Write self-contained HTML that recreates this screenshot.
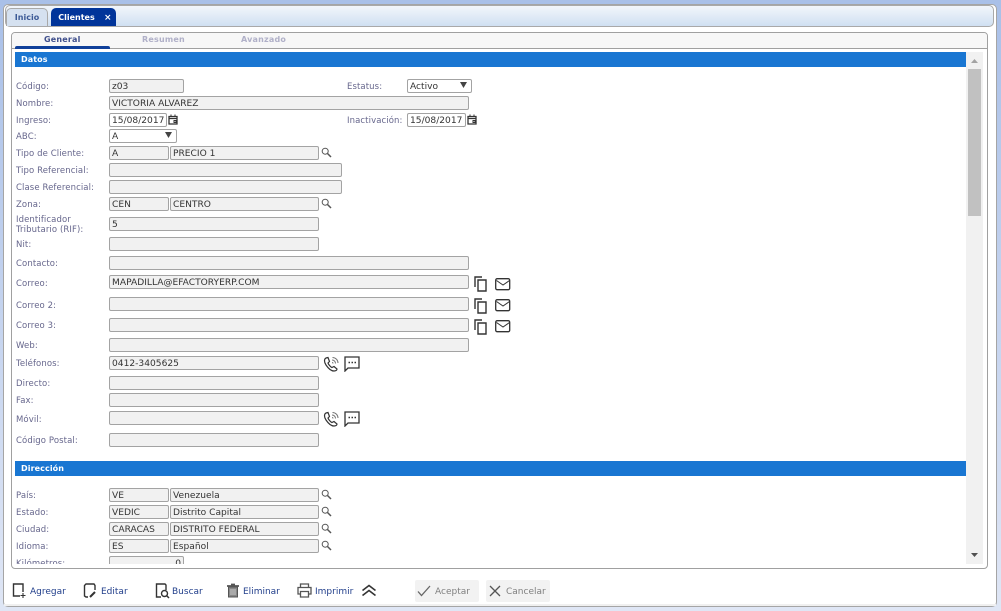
<!DOCTYPE html>
<html><head><meta charset="utf-8">
<style>
html,body{margin:0;padding:0}
body{width:1001px;height:611px;overflow:hidden;position:relative;background:linear-gradient(#a9c0e8,#dfe6f5);font-family:"DejaVu Sans","Liberation Sans",sans-serif;font-size:9px}
div,svg,span{position:absolute;box-sizing:border-box}
#outer{left:3px;top:4px;width:994px;height:603px;background:#fff;border:1px solid #a5a5a5;border-radius:5px}
#bar{left:5px;top:5px;width:989px;height:22px;background:linear-gradient(#f2f6fb,#d0e0f2);border:1px solid #a9a9a9;border-radius:5px}
.tab{top:8px;height:18px;border-radius:5px 5px 0 0;font-weight:bold;font-size:8px;line-height:20px;text-align:center}
#panel{left:11px;top:32px;width:977px;height:537px;border:1px solid #a0a0a0;border-radius:4px;background:#fff;overflow:hidden}
#strip{left:12px;top:33px;width:975px;height:16px;background:#f7f7f7;border-bottom:1px solid #a0a0a0;border-radius:3px 3px 0 0}
.st{top:35px;font-weight:bold;font-size:8px;color:#b0b0c8;letter-spacing:.2px;white-space:nowrap}
.sec{left:15px;width:951px;height:15px;background:#1976d2;color:#fff;font-weight:bold;font-size:8px;line-height:15px;padding-left:6px;letter-spacing:.1px}
.l{left:16px;font-size:8.5px;color:#66668c;white-space:nowrap;line-height:13px;letter-spacing:.1px}
.i{height:14px;background:#f1f1f1;border:1px solid #a3a3a3;border-radius:2px;color:#333;font-size:9.1px;line-height:14px;padding-left:2px;white-space:nowrap;overflow:hidden}
.w{background:#fff}
.f{top:585px;font-size:9px;color:#23408c;white-space:nowrap;line-height:14px}
.g{color:#808080}
svg{fill:none;stroke:#333}
.s{stroke:#555}
</style></head><body>
<div id="outer"></div>
<div id="bar"></div>
<div class="tab" style="left:6px;width:42px;background:#d5e1f0;border:1px solid #a9a9a9;border-bottom:0;color:#3c5a96;line-height:18px">Inicio</div>
<div class="tab" style="left:51px;width:65px;background:#00349a;color:#fff;padding-right:14px">Clientes<span style="left:53px;top:0;font-size:9px;font-weight:bold">×</span></div>

<div id="panel"></div>
<div id="strip"></div>
<div class="st" style="left:44px;color:#3f4f8c">General</div>
<div class="st" style="left:142px">Resumen</div>
<div class="st" style="left:241px">Avanzado</div>
<div style="left:15px;top:46px;width:95px;height:3px;background:#10409a;border-radius:2px 2px 0 0"></div>

<div style="left:966px;top:52px;width:17px;height:512px;background:#f1f1f1"></div>
<div style="left:968px;top:69px;width:13px;height:147px;background:#c1c1c1"></div>
<svg style="left:970px;top:58px;stroke:none" width="9" height="6"><path d="M1 5h7L4.500 1z" style="fill:#a3a3a3"/></svg>
<svg style="left:970px;top:552px;stroke:none" width="9" height="6"><path d="M1 1h7L4.500 5z" style="fill:#505050"/></svg>

<div class="sec" style="top:52px">Datos</div>
<div class="l" style="top:81px">Código:</div><div class="i" style="left:109px;top:79px;width:75px">z03</div>
<div class="l" style="left:347px;top:81px">Estatus:</div>
<div class="i w" style="left:407px;top:79px;width:65px">Activo<svg style="left:51px;top:2px;stroke:none" width="9" height="7"><path d="M1 0h7L4.500 6z" style="fill:#444"/></svg></div>
<div class="l" style="top:98px">Nombre:</div><div class="i" style="left:109px;top:96px;width:360px">VICTORIA ALVAREZ</div>
<div class="l" style="top:115px">Ingreso:</div><div class="i w" style="left:109px;top:113px;width:58px">15/08/2017</div>
<svg style="left:168px;top:114px" width="10" height="11" viewBox="0 0 10 11"><path d="M1 2.500h8V10H1zM1 4.500h8" stroke-width="1.300"/><path d="M3 .5v2M7 .5v2M6 6.500h2v2H6z"/></svg>
<div class="l" style="left:347px;top:115px">Inactivación:</div><div class="i w" style="left:407px;top:113px;width:59px">15/08/2017</div>
<svg style="left:467px;top:114px" width="10" height="11" viewBox="0 0 10 11"><path d="M1 2.500h8V10H1zM1 4.500h8" stroke-width="1.300"/><path d="M3 .5v2M7 .5v2M6 6.500h2v2H6z"/></svg>
<div class="l" style="top:131px">ABC:</div>
<div class="i w" style="left:109px;top:129px;width:68px">A<svg style="left:54px;top:2px;stroke:none" width="9" height="7"><path d="M1 0h7L4.500 6z" style="fill:#444"/></svg></div>
<div class="l" style="top:148px">Tipo de Cliente:</div><div class="i" style="left:109px;top:146px;width:60px">A</div><div class="i" style="left:170px;top:146px;width:149px">PRECIO 1</div>
<svg class="s" style="left:321px;top:147px" width="11" height="11" viewBox="0 0 11 11"><circle cx="4.200" cy="4.200" r="3"/><path d="M6.500 6.500l3.500 3.500" stroke-width="1.500"/></svg>
<div class="l" style="top:165px">Tipo Referencial:</div><div class="i" style="left:109px;top:163px;width:233px"></div>
<div class="l" style="top:182px">Clase Referencial:</div><div class="i" style="left:109px;top:180px;width:233px"></div>
<div class="l" style="top:199px">Zona:</div><div class="i" style="left:109px;top:197px;width:60px">CEN</div><div class="i" style="left:170px;top:197px;width:149px">CENTRO</div>
<svg class="s" style="left:321px;top:198px" width="11" height="11" viewBox="0 0 11 11"><circle cx="4.200" cy="4.200" r="3"/><path d="M6.500 6.500l3.500 3.500" stroke-width="1.500"/></svg>
<div class="l" style="top:214px">Identificador</div><div class="l" style="top:224px">Tributario (RIF):</div><div class="i" style="left:109px;top:217px;width:210px">5</div>
<div class="l" style="top:239px">Nit:</div><div class="i" style="left:109px;top:237px;width:210px"></div>
<div class="l" style="top:258px">Contacto:</div><div class="i" style="left:109px;top:256px;width:360px"></div>
<div class="l" style="top:278px">Correo:</div><div class="i" style="left:109px;top:275px;width:360px">MAPADILLA@EFACTORYERP.COM</div>
<svg style="left:474px;top:276px" width="14" height="16" viewBox="0 0 14 16"><path d="M1 11V1h7" stroke-width="1.400"/><path d="M4 4h8v11H4z" stroke-width="1.400"/></svg>
<svg style="left:495px;top:278px" width="16" height="13" viewBox="0 0 16 13"><rect x=".7" y=".7" width="14" height="11" rx="1.500" stroke-width="1.300"/><path d="M1.500 2.500L8 7l6.500-4.500"/></svg>
<div class="l" style="top:300px">Correo 2:</div><div class="i" style="left:109px;top:297px;width:360px"></div>
<svg style="left:474px;top:298px" width="14" height="16" viewBox="0 0 14 16"><path d="M1 11V1h7" stroke-width="1.400"/><path d="M4 4h8v11H4z" stroke-width="1.400"/></svg>
<svg style="left:495px;top:299px" width="16" height="13" viewBox="0 0 16 13"><rect x=".7" y=".7" width="14" height="11" rx="1.500" stroke-width="1.300"/><path d="M1.500 2.500L8 7l6.500-4.500"/></svg>
<div class="l" style="top:320px">Correo 3:</div><div class="i" style="left:109px;top:318px;width:360px"></div>
<svg style="left:474px;top:319px" width="14" height="16" viewBox="0 0 14 16"><path d="M1 11V1h7" stroke-width="1.400"/><path d="M4 4h8v11H4z" stroke-width="1.400"/></svg>
<svg style="left:495px;top:320px" width="16" height="13" viewBox="0 0 16 13"><rect x=".7" y=".7" width="14" height="11" rx="1.500" stroke-width="1.300"/><path d="M1.500 2.500L8 7l6.500-4.500"/></svg>
<div class="l" style="top:340px">Web:</div><div class="i" style="left:109px;top:338px;width:360px"></div>
<div class="l" style="top:358px">Teléfonos:</div><div class="i" style="left:109px;top:356px;width:210px">0412-3405625</div>
<svg style="left:323px;top:356px" width="17" height="16" viewBox="0 0 17 16"><path d="M3 2C1 3 1 6 3 9s5 6 8 6c2 0 3-1 3-2l-3-2.500-2 1C7.500 11 5.500 8.500 5 7l1.500-1.500L5 1.500z" stroke-width="1.200"/><path d="M9 4c2 0 3.500 1.500 3.500 3.500M9.500 1.500c3 0 5.500 2.500 5.500 5.500M9 6.500c.8 0 1 .4 1 1" stroke="#777"/></svg>
<svg style="left:344px;top:356px" width="17" height="16" viewBox="0 0 17 16"><path d="M1 1h14v11H4l-3 3z" stroke-width="1.300"/><path d="M4.500 6.500h1.500M7.500 6.500H9M10.500 6.500H12" stroke-width="1.500"/></svg>
<div class="l" style="top:378px">Directo:</div><div class="i" style="left:109px;top:376px;width:210px"></div>
<div class="l" style="top:395px">Fax:</div><div class="i" style="left:109px;top:393px;width:210px"></div>
<div class="l" style="top:414px">Móvil:</div><div class="i" style="left:109px;top:411px;width:210px"></div>
<svg style="left:323px;top:411px" width="17" height="16" viewBox="0 0 17 16"><path d="M3 2C1 3 1 6 3 9s5 6 8 6c2 0 3-1 3-2l-3-2.500-2 1C7.500 11 5.500 8.500 5 7l1.500-1.500L5 1.500z" stroke-width="1.200"/><path d="M9 4c2 0 3.500 1.500 3.500 3.500M9.500 1.500c3 0 5.500 2.500 5.500 5.500M9 6.500c.8 0 1 .4 1 1" stroke="#777"/></svg>
<svg style="left:344px;top:411px" width="17" height="16" viewBox="0 0 17 16"><path d="M1 1h14v11H4l-3 3z" stroke-width="1.300"/><path d="M4.500 6.500h1.500M7.500 6.500H9M10.500 6.500H12" stroke-width="1.500"/></svg>
<div class="l" style="top:435px">Código Postal:</div><div class="i" style="left:109px;top:433px;width:210px"></div>

<div class="sec" style="top:461px">Dirección</div>
<div class="l" style="top:490px">País:</div><div class="i" style="left:109px;top:488px;width:60px">VE</div><div class="i" style="left:170px;top:488px;width:149px">Venezuela</div>
<svg class="s" style="left:321px;top:489px" width="11" height="11" viewBox="0 0 11 11"><circle cx="4.200" cy="4.200" r="3"/><path d="M6.500 6.500l3.500 3.500" stroke-width="1.500"/></svg>
<div class="l" style="top:507px">Estado:</div><div class="i" style="left:109px;top:505px;width:60px">VEDIC</div><div class="i" style="left:170px;top:505px;width:149px">Distrito Capital</div>
<svg class="s" style="left:321px;top:506px" width="11" height="11" viewBox="0 0 11 11"><circle cx="4.200" cy="4.200" r="3"/><path d="M6.500 6.500l3.500 3.500" stroke-width="1.500"/></svg>
<div class="l" style="top:524px">Ciudad:</div><div class="i" style="left:109px;top:522px;width:60px">CARACAS</div><div class="i" style="left:170px;top:522px;width:149px">DISTRITO FEDERAL</div>
<svg class="s" style="left:321px;top:523px" width="11" height="11" viewBox="0 0 11 11"><circle cx="4.200" cy="4.200" r="3"/><path d="M6.500 6.500l3.500 3.500" stroke-width="1.500"/></svg>
<div class="l" style="top:541px">Idioma:</div><div class="i" style="left:109px;top:539px;width:60px">ES</div><div class="i" style="left:170px;top:539px;width:149px">Español</div>
<svg class="s" style="left:321px;top:540px" width="11" height="11" viewBox="0 0 11 11"><circle cx="4.200" cy="4.200" r="3"/><path d="M6.500 6.500l3.500 3.500" stroke-width="1.500"/></svg>
<div style="left:12px;top:556px;width:400px;height:8px;overflow:hidden">
<div class="l" style="left:4px;top:2px">Kilómetros:</div><div class="i" style="left:97px;top:0;width:75px;text-align:right;padding-right:2px">0</div></div>

<div style="left:4px;top:604px;width:992px;height:2px;background:#f0f0f0"></div>

<svg style="left:12px;top:583px" width="15" height="16" viewBox="0 0 15 16"><path d="M8 13H1.500V1h9.500v8" stroke-width="1.400"/><path d="M11 10v5M8.500 12.500h5" stroke-width="1.100"/></svg>
<div class="f" style="left:30px">Agregar</div>
<svg style="left:83px;top:583px" width="15" height="16" viewBox="0 0 15 16"><path d="M5 14H3L1.500 13V2.500L3 1h8l1 1.500V7" stroke-width="1.400"/><path d="M7 14l5-5" stroke-width="2" stroke="#333"/></svg>
<div class="f" style="left:101px">Editar</div>
<svg style="left:155px;top:583px" width="15" height="16" viewBox="0 0 15 16"><path d="M6 14H1.500V1h8.500l1 1v5" stroke-width="1.400"/><circle cx="9.500" cy="10.500" r="3" stroke-width="1.400"/><path d="M11.500 12.500l2.500 2.500" stroke-width="1.500"/></svg>
<div class="f" style="left:172px">Buscar</div>
<svg style="left:226px;top:583px;stroke:#555" width="14" height="15" viewBox="0 0 14 15"><path d="M2.500 4h9v10h-9z" style="fill:#888"/><path d="M1 3h12M5 1.500h4" stroke-width="1.800"/><path d="M5 6v6M7 6v6M9 6v6" stroke="#ddd" stroke-width=".8"/></svg>
<div class="f" style="left:243px">Eliminar</div>
<svg style="left:297px;top:583px;stroke:#555" width="15" height="15" viewBox="0 0 15 15"><path d="M3.500 4V1h8v3M3.500 11H1V4.500h13V11h-2.500" stroke-width="1.300"/><path d="M3.500 8.500h8V14h-8z" stroke-width="1.300"/></svg>
<div class="f" style="left:315px">Imprimir</div>
<svg style="left:361px;top:584px" width="16" height="13" viewBox="0 0 16 13"><path d="M1.500 6.500L8 1.500l6.500 5M1.500 11.500L8 6.500l6.500 5" stroke-width="1.600"/></svg>

<div style="left:415px;top:580px;width:64px;height:22px;background:#f2f2f2;border-radius:2px"></div>
<svg style="left:417px;top:585px;stroke:#666" width="14" height="12" viewBox="0 0 14 12"><path d="M1 6.500L4.500 10.500 13 1" stroke-width="1.300"/></svg>
<div class="f g" style="left:435px">Aceptar</div>
<div style="left:486px;top:580px;width:64px;height:22px;background:#f2f2f2;border-radius:2px"></div>
<svg style="left:489px;top:585px;stroke:#555" width="12" height="12" viewBox="0 0 12 12"><path d="M1 1l10 10M11 1L1 11" stroke-width="1.300"/></svg>
<div class="f g" style="left:506px">Cancelar</div>
</body></html>
